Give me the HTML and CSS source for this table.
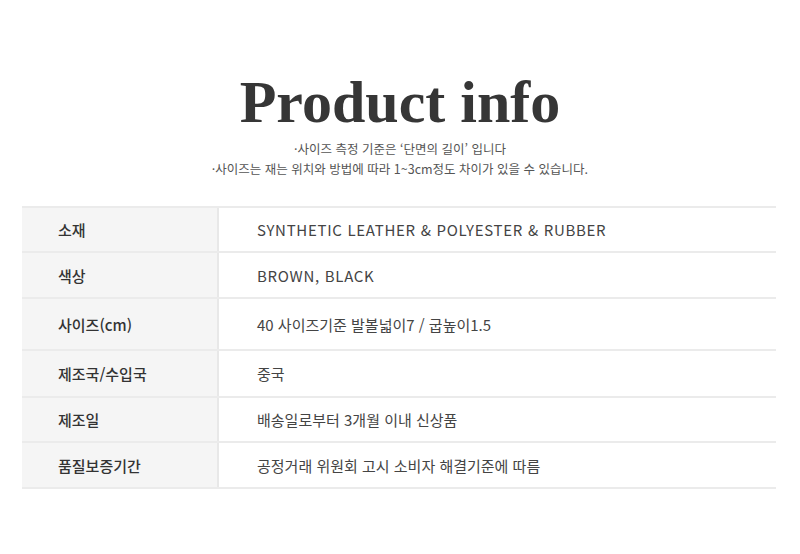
FILE: index.html
```html
<!DOCTYPE html>
<html lang="ko">
<head>
<meta charset="utf-8">
<title>Product info</title>
<link rel="stylesheet" href="styles.css">
</head>
<body>
<div class="page">
  <header class="head">
    <h1 class="title">Product info</h1>
    <p class="note">·사이즈 측정 기준은 ‘단면의 길이’ 입니다</p>
    <p class="note">·사이즈는 재는 위치와 방법에 따라 1~3cm정도 차이가 있을 수 있습니다.</p>
  </header>
  <div class="table">
    <div class="row r1"><div class="label">소재</div><div class="value latin">SYNTHETIC LEATHER &amp; POLYESTER &amp; RUBBER</div></div>
    <div class="row"><div class="label">색상</div><div class="value latin">BROWN, BLACK</div></div>
    <div class="row tall"><div class="label">사이즈(cm)</div><div class="value">40 사이즈기준 발볼넓이7 / 굽높이1.5</div></div>
    <div class="row r4"><div class="label">제조국/수입국</div><div class="value">중국</div></div>
    <div class="row r5"><div class="label">제조일</div><div class="value">배송일로부터 3개월 이내 신상품</div></div>
    <div class="row"><div class="label">품질보증기간</div><div class="value">공정거래 위원회 고시 소비자 해결기준에 따름</div></div>
  </div>
</div>
</body>
</html>
```
FILE: styles.css
```css
html, body {
  margin: 0;
  padding: 0;
  background: #fff;
}
.page {
  width: 800px;
  font-family: "Noto Sans CJK KR", "Noto Sans", sans-serif;
}
.head {
  padding-top: 72px;
  text-align: center;
}
.title {
  margin: 0 0 7px;
  font-family: "Liberation Serif", serif;
  font-weight: bold;
  font-size: 60px;
  line-height: 60px;
  letter-spacing: 0;
  color: #363636;
}
.note {
  margin: 0;
  font-size: 12.5px;
  line-height: 20px;
  color: #555;
}
.table {
  margin: 27px 0 0 22px;
  width: 754px;
  border-top: 2px solid #ebebeb;
}
.row {
  display: flex;
  height: 44px;
  border-bottom: 2px solid #ebebeb;
}
.row.r1 {
  height: 43px;
}
.row.tall {
  height: 50px;
}
.row.r4 {
  height: 45px;
}
.row.r5 {
  height: 43px;
}
.label {
  width: 197px;
  flex: none;
  display: flex;
  align-items: center;
  padding-left: 36px;
  box-sizing: border-box;
  background: #f5f5f5;
  border-right: 2px solid #e8e8e8;
  font-size: 15px;
  font-weight: 500;
  color: #333;
}
.value {
  display: flex;
  align-items: center;
  padding-left: 38px;
  font-size: 15px;
  color: #444;
}
.value.latin {
  letter-spacing: 0.7px;
}
```
